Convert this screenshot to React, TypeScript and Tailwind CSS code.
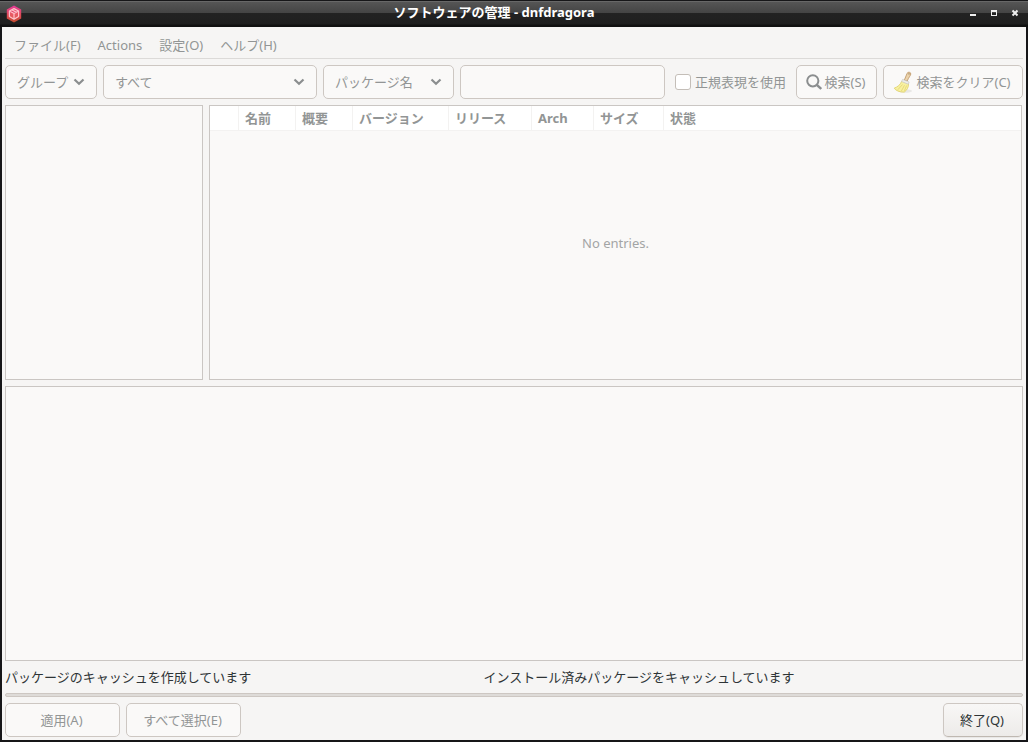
import { ReactNode } from "react";

const MENUS = ["ファイル(F)", "Actions", "設定(O)", "ヘルプ(H)"];

const COLUMNS = [
  { label: "", width: "w-[29px]" },
  { label: "名前", width: "w-[57px]" },
  { label: "概要", width: "w-[57px]" },
  { label: "バージョン", width: "w-24" },
  { label: "リリース", width: "w-[83px]" },
  { label: "Arch", width: "w-[62px]" },
  { label: "サイズ", width: "w-[70px]" },
  { label: "状態", width: "" },
];

const AppLogo = () => (
  <svg width="16" height="18" viewBox="0 0 16 18" aria-hidden="true">
    <defs>
      <linearGradient id="logo" x1="0" y1="0" x2="0" y2="1">
        <stop offset="0" stopColor="#e6399b" />
        <stop offset="0.55" stopColor="#e04b58" />
        <stop offset="1" stopColor="#c04a2c" />
      </linearGradient>
    </defs>
    <path d="M8 0.5 15.2 4.5v9L8 17.5 0.8 13.5v-9z" fill="url(#logo)" />
    <path
      d="M8 3.6 12.6 6v5.4L8 14.2 3.4 11.4V6zM3.4 6 8 8.5 12.6 6M8 8.5v5.7M5.7 4.8l4.6 2.5"
      fill="#f0686a"
      fillOpacity="0.5"
      stroke="#ffc4cb"
      strokeWidth="1.2"
      strokeLinejoin="round"
    />
  </svg>
);

const Chevron = () => (
  <svg width="12" height="8" viewBox="0 0 12 8" fill="none" aria-hidden="true">
    <path d="M1.5 1.5 6 5.8l4.5-4.3" stroke="#8b8e8f" strokeWidth="2.2" />
  </svg>
);

const SearchIcon = () => (
  <svg width="16" height="16" viewBox="0 0 16 16" fill="none" aria-hidden="true">
    <circle cx="6.8" cy="6.8" r="5.6" stroke="#8b8e8f" strokeWidth="2" />
    <path d="m10.8 10.8 4.4 4.2" stroke="#8b8e8f" strokeWidth="2.4" />
  </svg>
);

const BroomIcon = () => (
  <svg width="20" height="24" viewBox="0 0 20 24" fill="none" aria-hidden="true">
    <ellipse cx="12" cy="21" rx="7" ry="1.8" fill="#e9e8e6" />
    <path
      d="M11.3 10.2 14.2 3.2c.6-1.6 3.8-1.2 3.6.8-.1 1.4-2.3 3.6-3.6 7z"
      fill="#ecd3ab"
      stroke="#c6a377"
    />
    <path d="M16 3.2v1.3" stroke="#8f7755" />
    <path
      d="M8.8 11.2C7.3 15 4.4 17 1.2 18.2c1.5 2.4 5.5 4 10 3.9 2.6-1.8 4.4-4.6 4.3-8.2z"
      fill="#f8f1a0"
      stroke="#e4d778"
    />
    <path
      d="m9.5 14.5-4.6 5.2M11.5 15.2 8.4 21M13.6 15.5l-2.2 5.3"
      stroke="#e2d370"
      strokeWidth="0.8"
    />
    <path d="m9.6 9.4 6.5 2.6-.8 2.2-6.7-2.7z" fill="#eeeeec" stroke="#c9c9c4" strokeWidth="0.7" />
  </svg>
);

interface ComboProps {
  label: string;
  value: string;
  className: string;
}

const Combo = ({ label, value, className }: ComboProps) => (
  <div className={`relative flex items-center ${className}`}>
    <select
      aria-label={label}
      disabled
      className="h-[34px] w-full appearance-none rounded-[5px] border border-[#cdc7c2] bg-[#faf9f8] pl-[11px] text-[#929595] opacity-100"
    >
      <option>{value}</option>
    </select>
    <span className="pointer-events-none absolute right-3">
      <Chevron />
    </span>
  </div>
);

interface PushButtonProps {
  children: ReactNode;
  className?: string;
}

const PushButton = ({ children, className = "" }: PushButtonProps) => (
  <button
    type="button"
    disabled
    className={`flex h-[34px] shrink-0 items-center justify-center gap-[3px] whitespace-nowrap rounded-[5px] border border-[#cdc7c2] bg-[#faf9f8] pr-[2px] text-[#929595] ${className}`}
  >
    {children}
  </button>
);

const TitleBar = () => (
  <header className="flex h-[27px] shrink-0 items-center border-t border-[#161618] bg-[linear-gradient(#7a7a7a_0px,#555_1px,#444_12px,#222_12px,#1f1f1f_23px,#111_24px)] px-[6px] text-white">
    <AppLogo />
    <h1 className="flex-1 pb-1 pl-2 text-center font-bold">
      ソフトウェアの管理 - dnfdragora
    </h1>
    <div className="flex w-16 items-center justify-end gap-[13px] pr-[3px] pb-[2px]">
      <button type="button" aria-label="Minimize">
        <svg className="block" width="8" height="8" viewBox="0 0 8 8">
          <path d="M1 5h6v2H1z" fill="#eee" />
        </svg>
      </button>
      <button type="button" aria-label="Maximize">
        <svg className="block" width="8" height="8" viewBox="0 0 8 8">
          <path d="M1 1h6v6H1zM2 3v3h4V3z" fill="#eee" fillRule="evenodd" />
        </svg>
      </button>
      <button type="button" aria-label="Close">
        <svg className="block" width="8" height="8" viewBox="0 0 8 8">
          <path d="m1.5 1.5 5 5m0-5-5 5" stroke="#eee" strokeWidth="2" />
        </svg>
      </button>
    </div>
  </header>
);

const MenuBar = () => (
  <nav className="flex h-8 shrink-0 items-center gap-[17px] border-b border-[#dcdad8] px-[9px] pt-1 text-[#929595]">
    {MENUS.map((menu) => (
      <button key={menu} type="button" disabled className="whitespace-nowrap">
        {menu}
      </button>
    ))}
  </nav>
);

const Toolbar = () => (
  <div className="mt-[6px] flex shrink-0 items-center">
    <Combo label="グループ" value="グループ" className="mr-[6px] w-[92px] shrink-0" />
    <Combo label="分類" value="すべて" className="mr-[6px] grow basis-[214px]" />
    <Combo label="検索対象" value="パッケージ名" className="mr-[6px] w-[131px] shrink-0" />
    <input
      type="text"
      aria-label="検索"
      disabled
      className="h-[34px] min-w-0 grow basis-[205px] rounded-[5px] border border-[#cdc7c2] bg-[#faf9f8] px-2"
    />
    <label className="mx-[10px] flex shrink-0 items-center gap-1 whitespace-nowrap text-[#929595]">
      <input
        type="checkbox"
        disabled
        className="size-4 appearance-none rounded-[3px] border border-[#c4beb8] bg-white"
      />
      正規表現を使用
    </label>
    <PushButton className="mr-[6px] w-[81px]">
      <SearchIcon />
      検索(S)
    </PushButton>
    <PushButton className="w-[140px]">
      <BroomIcon />
      検索をクリア(C)
    </PushButton>
  </div>
);

const PackageTable = () => (
  <div className="relative min-w-0 flex-1 border border-[#cac6c3] bg-[#faf9f8]">
    <table className="w-full table-fixed border-separate border-spacing-0">
      <thead>
        <tr className="h-[25px] bg-white text-left text-[#929595]">
          {COLUMNS.map(({ label, width }, i) => (
            <th
              key={i}
              className={`border-r border-b border-[#f3f2f1] px-[6px] py-0 font-bold whitespace-nowrap last:border-r-0 ${width}`}
            >
              {label}
            </th>
          ))}
        </tr>
      </thead>
    </table>
    <p className="absolute inset-0 flex items-center justify-center text-[#a3a5a5]">No entries.</p>
  </div>
);

export default function App() {
  return (
    <div className="flex min-h-screen flex-col bg-[#161618] font-['Noto_Sans','Noto_Sans_CJK_JP',sans-serif] text-[13px] leading-5 text-[#2e3436]">
      <TitleBar />
      <main className="mx-[2px] mb-[2px] flex flex-1 flex-col bg-[#f6f5f4] px-[3px] pb-[3px]">
        <MenuBar />
        <Toolbar />

        {/* Group tree and package list */}
        <div className="mt-[6px] flex min-h-24 grow basis-24 gap-[6px] pr-[1px]">
          <aside className="w-[198px] shrink-0 border border-[#cac6c3] bg-[#faf9f8]" />
          <PackageTable />
        </div>

        {/* Package details */}
        <section className="mt-[6px] min-h-24 grow basis-24 border border-[#cac6c3] bg-[#faf9f8]" />

        {/* Progress */}
        <div className="flex h-8 shrink-0 items-center">
          <p className="w-[47%] whitespace-nowrap">パッケージのキャッシュを作成しています</p>
          <p className="whitespace-nowrap">インストール済みパッケージをキャッシュしています</p>
        </div>
        <div
          role="progressbar"
          aria-label="進捗"
          className="h-1 shrink-0 rounded-[2px] border border-[#cdc7c2] bg-[#dedbd8]"
        />

        <footer className="mt-[6px] flex shrink-0 gap-[6px]">
          <PushButton className="w-[115px]">適用(A)</PushButton>
          <PushButton className="w-[115px]">すべて選択(E)</PushButton>
          <button
            type="button"
            className="ml-auto h-[34px] w-20 rounded-[5px] border border-[#cdc7c2] border-b-[#bfb8b1] bg-linear-to-b from-[#f8f7f6] to-[#edebe9] pr-[2px] whitespace-nowrap shadow-[0_1px_1px_rgba(0,0,0,0.06)]"
          >
            終了(Q)
          </button>
        </footer>
      </main>
    </div>
  );
}
